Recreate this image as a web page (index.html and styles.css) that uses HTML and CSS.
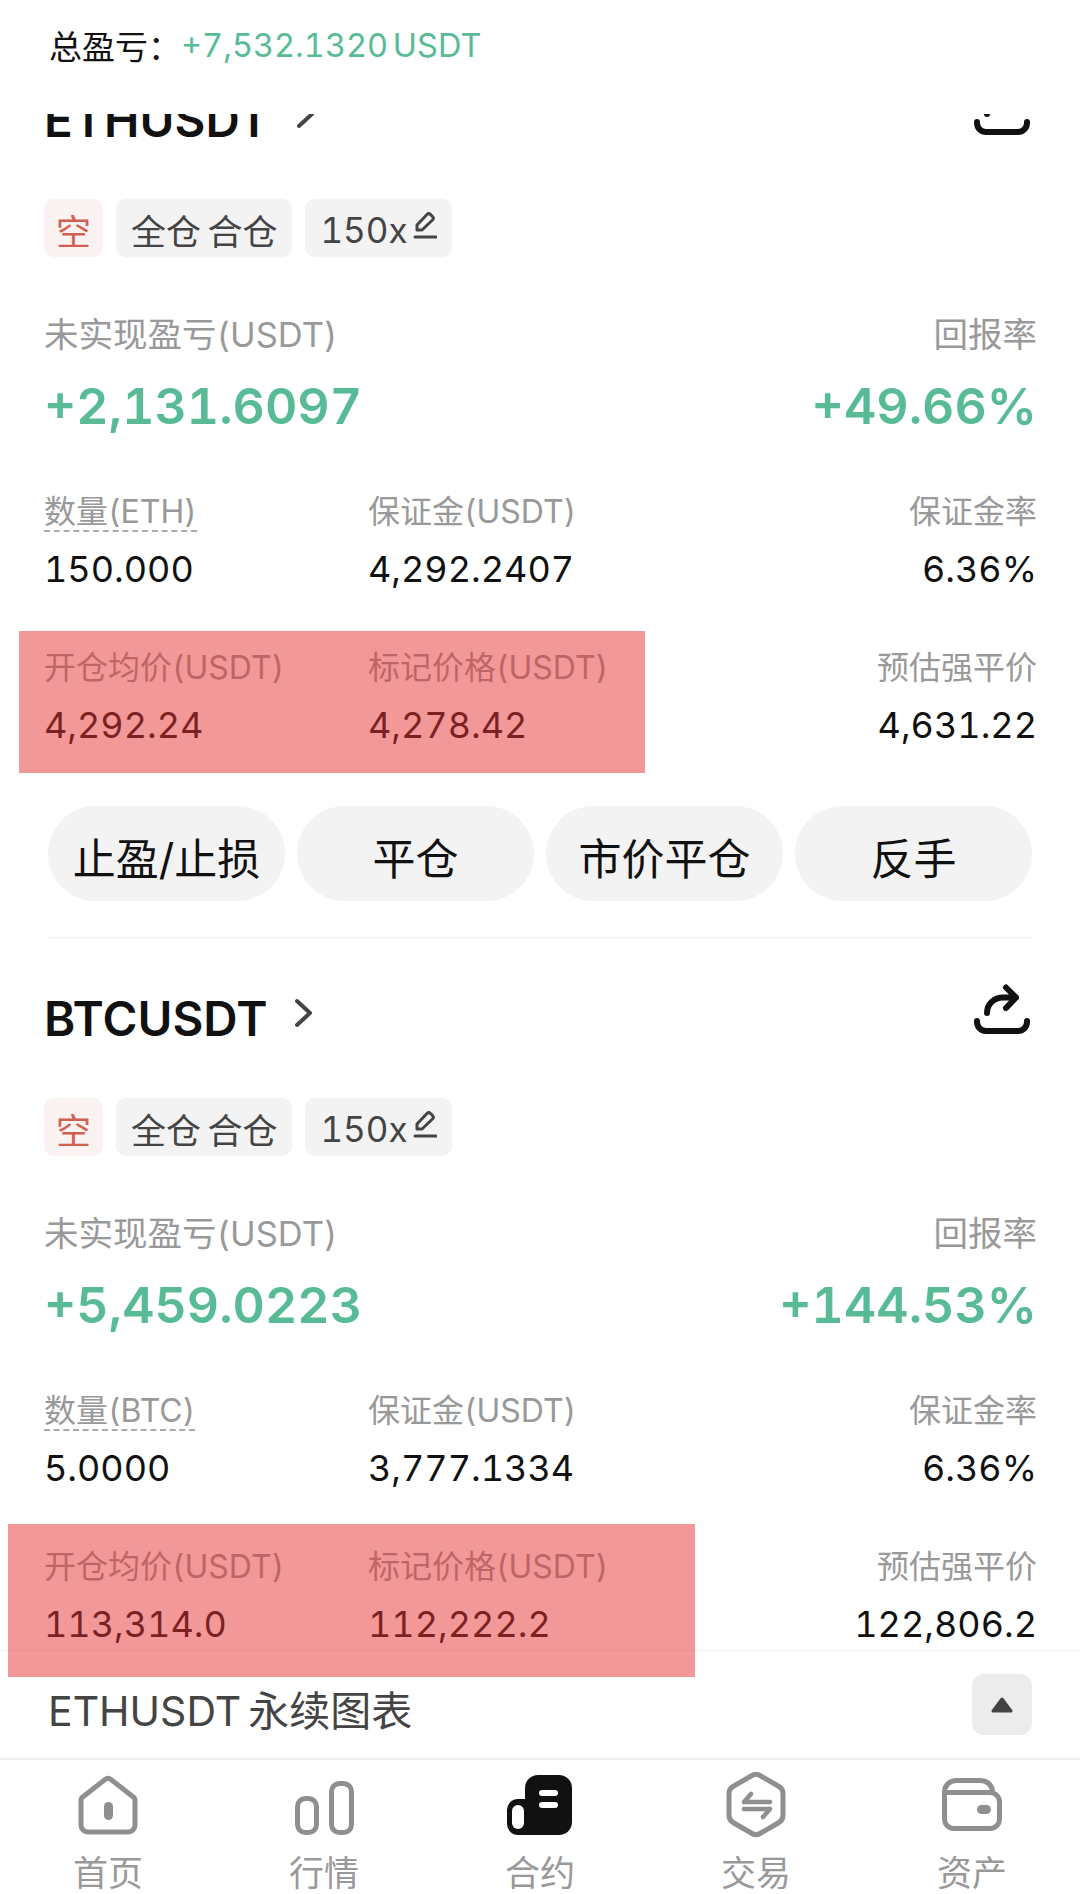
FILE: index.html
```html
<!DOCTYPE html>
<html lang="zh">
<head>
    <meta charset="UTF-8">
    <meta name="viewport" content="width=device-width, initial-scale=1.0">
    <title>合约持仓</title>
    <link rel="stylesheet" href="styles.css">
</head>
<body>
    <div class="page">
        <header class="summary">
            <span class="summary-label">总盈亏：</span>
            <span class="summary-value">+7,532.1320 USDT</span>
        </header>

        <main class="positions">
            <div class="positions-inner">
                <section class="card">
                    <div class="card-head">
                        <h2 class="symbol">ETHUSDT</h2>
                        <svg class="chevron" viewBox="0 0 20 30"><path d="M3 3l13 12L3 27"/></svg>
                        <svg class="share" viewBox="0 0 60 60"><path d="M15 34c0-9 7-15.500 16-15.500h13M34 8.500l10 10L34 29M5 42v1a9 9 0 0 0 9 9h32a9 9 0 0 0 9-9v-1"/></svg>
                    </div>
                    <div class="tags">
                        <span class="tag tag-short">空</span>
                        <span class="tag">全仓 合仓</span>
                        <span class="tag">150x<svg class="pen" viewBox="0 0 24 28"><path d="M4 19v-5L14 3.500a2.500 2.500 0 0 1 3.500 0l2 2a2.500 2.500 0 0 1 0 3.500L9 19zM2 26h21"/></svg></span>
                    </div>
                    <div class="pnl">
                        <div>
                            <div class="label label-big">未实现盈亏(USDT)</div>
                            <div class="pnl-value">+2,131.6097</div>
                        </div>
                        <div class="right">
                            <div class="label label-big">回报率</div>
                            <div class="pnl-value">+49.66%</div>
                        </div>
                    </div>
                    <div class="metrics">
                        <div>
                            <div class="label"><span class="dashed">数量(ETH)</span></div>
                            <div class="value">150.000</div>
                        </div>
                        <div>
                            <div class="label">保证金(USDT)</div>
                            <div class="value">4,292.2407</div>
                        </div>
                        <div class="right">
                            <div class="label">保证金率</div>
                            <div class="value">6.36%</div>
                        </div>
                        <div>
                            <div class="label">开仓均价(USDT)</div>
                            <div class="value">4,292.24</div>
                        </div>
                        <div>
                            <div class="label">标记价格(USDT)</div>
                            <div class="value">4,278.42</div>
                        </div>
                        <div class="right">
                            <div class="label">预估强平价</div>
                            <div class="value">4,631.22</div>
                        </div>
                    </div>
                    <div class="actions">
                        <button class="action">止盈/止损</button>
                        <button class="action">平仓</button>
                        <button class="action">市价平仓</button>
                        <button class="action">反手</button>
                    </div>
                </section>

                <section class="card">
                    <div class="card-head">
                        <h2 class="symbol">BTCUSDT</h2>
                        <svg class="chevron" viewBox="0 0 20 30"><path d="M3 3l13 12L3 27"/></svg>
                        <svg class="share" viewBox="0 0 60 60"><path d="M15 34c0-9 7-15.500 16-15.500h13M34 8.500l10 10L34 29M5 42v1a9 9 0 0 0 9 9h32a9 9 0 0 0 9-9v-1"/></svg>
                    </div>
                    <div class="tags">
                        <span class="tag tag-short">空</span>
                        <span class="tag">全仓 合仓</span>
                        <span class="tag">150x<svg class="pen" viewBox="0 0 24 28"><path d="M4 19v-5L14 3.500a2.500 2.500 0 0 1 3.500 0l2 2a2.500 2.500 0 0 1 0 3.500L9 19zM2 26h21"/></svg></span>
                    </div>
                    <div class="pnl">
                        <div>
                            <div class="label label-big">未实现盈亏(USDT)</div>
                            <div class="pnl-value">+5,459.0223</div>
                        </div>
                        <div class="right">
                            <div class="label label-big">回报率</div>
                            <div class="pnl-value">+144.53%</div>
                        </div>
                    </div>
                    <div class="metrics">
                        <div>
                            <div class="label"><span class="dashed">数量(BTC)</span></div>
                            <div class="value">5.0000</div>
                        </div>
                        <div>
                            <div class="label">保证金(USDT)</div>
                            <div class="value">3,777.1334</div>
                        </div>
                        <div class="right">
                            <div class="label">保证金率</div>
                            <div class="value">6.36%</div>
                        </div>
                        <div>
                            <div class="label">开仓均价(USDT)</div>
                            <div class="value">113,314.0</div>
                        </div>
                        <div>
                            <div class="label">标记价格(USDT)</div>
                            <div class="value">112,222.2</div>
                        </div>
                        <div class="right">
                            <div class="label">预估强平价</div>
                            <div class="value">122,806.2</div>
                        </div>
                    </div>
                </section>
            </div>
        </main>

        <div class="chart-bar">
            <span class="chart-title">ETHUSDT 永续图表</span>
            <div class="chart-toggle"><svg viewBox="0 0 22 16"><path d="M11 2L20 14H2z"/></svg></div>
        </div>

        <nav class="tabbar">
            <a class="tab">
                <svg class="tab-icon" viewBox="0 0 60 60"><path d="M27 4.500a5 5 0 0 1 6 0L54 21a5 5 0 0 1 3 5v24a7 7 0 0 1-7 7H10a7 7 0 0 1-7-7V26a5 5 0 0 1 3-5z"/><rect class="solid" x="26" y="27" width="9" height="18" rx="4.500"/></svg>
                <span>首页</span>
            </a>
            <a class="tab">
                <svg class="tab-icon" viewBox="0 0 60 60"><rect x="3.500" y="23.500" width="19" height="34" rx="8"/><rect x="37.500" y="8.500" width="20" height="49" rx="8"/></svg>
                <span>行情</span>
            </a>
            <a class="tab tab-active">
                <svg class="tab-icon" viewBox="0 0 66 60"><rect class="ink" x="0" y="24" width="30" height="36" rx="11"/><rect class="hole" x="5" y="30" width="12" height="24" rx="6"/><path class="block" d="M18 13a13 13 0 0 1 13-13h21a13 13 0 0 1 13 13v34a13 13 0 0 1-13 13H18z"/><rect class="hole" x="32" y="15" width="19" height="6" rx="3"/><rect class="hole" x="32" y="27" width="19" height="6" rx="3"/></svg>
                <span>合约</span>
            </a>
            <a class="tab">
                <svg class="tab-icon tab-icon-hex" viewBox="0 0 60 66"><path d="M26 3.500a8 8 0 0 1 8 0l19 11a8 8 0 0 1 4 7v22a8 8 0 0 1-4 7l-19 11a8 8 0 0 1-8 0l-19-11a8 8 0 0 1-4-7V21.500a8 8 0 0 1 4-7z"/><path class="thin" d="M18 30h26M25 22l-7 8M18 37h26M37 45l7-8"/></svg>
                <span>交易</span>
            </a>
            <a class="tab">
                <svg class="tab-icon" viewBox="0 0 60 60"><path d="M50.500 17.500c0-7-5-12-12-12H14A11.500 11.500 0 0 0 2.500 17v27a9.500 9.500 0 0 0 9.500 9.500h36a9.500 9.500 0 0 0 9.500-9.500V27a9.500 9.500 0 0 0-9.500-9.500H3"/><rect class="solid" x="35" y="30" width="14" height="9" rx="4.500"/></svg>
                <span>资产</span>
            </a>
        </nav>

        <!-- red marks drawn over the prices -->
        <div class="mark mark-eth"></div>
        <div class="mark mark-btc"></div>
    </div>
</body>
</html>
```

FILE: styles.css
```css
* {
    margin: 0;
    padding: 0;
    box-sizing: border-box;
}

body {
    font-family: "Inter", "Noto Sans CJK SC", sans-serif;
    font-variant-numeric: tabular-nums;
    background: #fff;
    color: #111;
}

.page {
    position: relative;
    display: flex;
    flex-direction: column;
    width: 1080px;
    height: 1894px;
    overflow: hidden;
}

.summary {
    flex: 0 0 114px;
    display: flex;
    align-items: center;
    padding: 0 49px 24px;
    font-size: 33px;
}

.summary-value {
    font-size: 32.500px;
    word-spacing: -4px;
    color: #58bb95;
}

.positions {
    flex: 1;
    min-height: 0;
    overflow: hidden;
}

.positions-inner {
    margin-top: -75px;
}

.card {
    padding: 50px 43px 37px 44px;
    position: relative;
}

.card + .card::before {
    content: "";
    position: absolute;
    top: -1px;
    left: 48px;
    right: 48px;
    height: 1px;
    background: #f0f0f0;
}

.card-head {
    display: flex;
    align-items: center;
    height: 60px;
}

.symbol {
    font-size: 47.500px;
    font-weight: 600;
    font-variant-numeric: normal;
    color: #111;
}

.chevron {
    width: 20px;
    height: 30px;
    margin-left: 26px;
    margin-top: -11px;
    fill: none;
    stroke: #444;
    stroke-width: 4;
    stroke-linecap: round;
    stroke-linejoin: round;
}

.share {
    width: 60px;
    height: 60px;
    margin-left: auto;
    margin-right: 5px;
    margin-top: -19px;
    fill: none;
    stroke: #111;
    stroke-width: 6;
    stroke-linecap: round;
    stroke-linejoin: round;
}

.tags {
    display: flex;
    gap: 13px;
    margin-top: 50px;
}

.tag {
    display: flex;
    align-items: center;
    height: 58px;
    padding: 3px 15px 0;
    border-radius: 10px;
    background: #f3f3f3;
    color: #444;
    font-size: 35px;
    word-spacing: -3px;
}

.tag-short {
    padding: 3px 12px 0;
    background: #fbf3f2;
    color: #d2604f;
}

.pen {
    width: 24px;
    height: 28px;
    margin: -10px 0 0 5px;
    fill: none;
    stroke: #444;
    stroke-width: 3;
    stroke-linecap: round;
    stroke-linejoin: round;
}

.pnl {
    display: flex;
    justify-content: space-between;
    margin-top: 56px;
}

.label {
    height: 44px;
    line-height: 44px;
    font-size: 32px;
    color: #999;
}

.label-big {
    font-size: 34.500px;
}

.pnl-value {
    height: 70px;
    line-height: 70px;
    margin-top: 14px;
    font-size: 50px;
    font-weight: 600;
    color: #58bb95;
}

.right {
    text-align: right;
}

.metrics {
    display: grid;
    grid-template-columns: 324px 1fr auto;
    row-gap: 55px;
    margin-top: 49px;
}

.dashed {
    display: inline-block;
    height: 42px;
    border-bottom: 2px dashed #aaa;
}

.value {
    height: 44px;
    line-height: 44px;
    margin-top: 13px;
    font-size: 36px;
    color: #111;
}

.actions {
    display: flex;
    gap: 12px;
    margin: 59px 5px 0 4px;
}

.action {
    flex: 1;
    height: 95px;
    padding-top: 4px;
    border: 0;
    border-radius: 48px;
    background: #f3f3f3;
    color: #111;
    font-family: inherit;
    font-size: 43px;
}

.chart-bar {
    flex: 0 0 108px;
    display: flex;
    align-items: center;
    justify-content: space-between;
    padding: 0 48px;
    border-top: 1px solid #f0f0f0;
}

.chart-title {
    padding-top: 6px;
    font-size: 41px;
    word-spacing: -4px;
    color: #444;
}

.chart-toggle {
    display: flex;
    align-items: center;
    justify-content: center;
    width: 60px;
    height: 61px;
    border-radius: 12px;
    background: #ececec;
}

.chart-toggle svg {
    width: 22px;
    height: 16px;
    fill: #444;
    stroke: #444;
    stroke-width: 3;
    stroke-linejoin: round;
}

.tabbar {
    flex: 0 0 136px;
    display: flex;
    min-height: 0;
    border-top: 2px solid #eee;
}

.tab {
    flex: 1;
    display: flex;
    flex-direction: column;
    align-items: center;
    padding-top: 15px;
    font-size: 35px;
    color: #999;
}

.tab span {
    margin-top: 18px;
    line-height: 41px;
}

.tab-icon {
    height: 60px;
    fill: none;
    stroke: #8f8f8f;
    stroke-width: 5;
    stroke-linejoin: round;
}

.tab-icon-hex {
    height: 66px;
    margin: -3px 0;
}

.tab-icon .solid {
    fill: #8f8f8f;
    stroke: none;
}

.tab-icon .thin {
    stroke-width: 4.500;
    stroke-linecap: round;
}

.tab-active .tab-icon .ink,
.tab-active .tab-icon .block {
    fill: #111;
    stroke: none;
}

.tab-active .tab-icon .hole {
    fill: #fff;
    stroke: none;
}

.mark {
    position: absolute;
    background: rgba(230, 50, 50, 0.5);
}

.mark-eth {
    left: 19px;
    top: 631px;
    width: 626px;
    height: 142px;
}

.mark-btc {
    left: 8px;
    top: 1524px;
    width: 687px;
    height: 153px;
}
```
